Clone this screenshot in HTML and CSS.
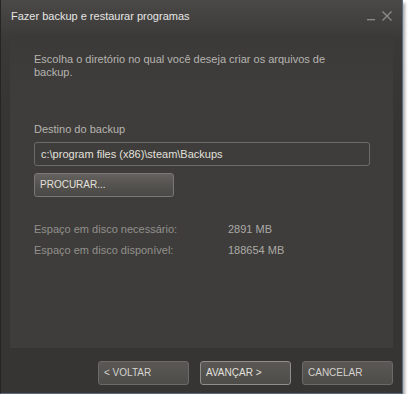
FILE: index.html
```html
<!DOCTYPE html>
<html>
<head>
<meta charset="utf-8">
<link rel="stylesheet" href="styles.css">
</head>
<body>
<div class="window">
  <div class="titlebar">
    <span class="title">Fazer backup e restaurar programas</span>
    <div class="controls">
      <svg class="min" width="9" height="10" viewBox="0 0 9 10"><rect x="0" y="8" width="8" height="1.3" fill="#8e8c89"/></svg>
      <svg class="close" width="12" height="12" viewBox="0 0 12 12"><path d="M1.5 1.5 L10.5 10.5 M10.5 1.5 L1.5 10.5" stroke="#8e8c89" stroke-width="1.4" fill="none"/></svg>
    </div>
  </div>
  <div class="panel">
    <p class="intro">Escolha o diretório no qual você deseja criar os arquivos de backup.</p>
    <div class="label">Destino do backup</div>
    <div class="input">c:\program files (x86)\steam\Backups</div>
    <div class="btn browse">PROCURAR...</div>
    <div class="rows">
      <div class="row"><span class="k">Espaço em disco necessário:</span><span class="v">2891 MB</span></div>
      <div class="row"><span class="k">Espaço em disco disponível:</span><span class="v">188654 MB</span></div>
    </div>
  </div>
  <div class="footer">
    <div class="btn fbtn">&lt; VOLTAR</div>
    <div class="btn fbtn focus">AVANÇAR &gt;</div>
    <div class="btn fbtn">CANCELAR</div>
  </div>
</div>
</body>
</html>
```
FILE: styles.css
```css
html, body {
  margin: 0;
  padding: 0;
  background: #ffffff;
}
body {
  font-family: "Liberation Sans", Arial, sans-serif;
  font-size: 11px;
}
.window {
  width: 403px;
  height: 394px;
  background: linear-gradient(to bottom, #4a4947 0px, #3a3937 40px, #363533 120px, #363533 100%);
  border-left: 1px solid #262524;
  border-right: 1px solid #5a6b80;
  border-bottom: 1px solid #5a6b80;
  box-sizing: border-box;
  box-shadow: 2px 3px 3px rgba(0,0,0,0.35);
  display: flex;
  flex-direction: column;
}
.titlebar {
  height: 34px;
  display: flex;
  align-items: flex-start;
  justify-content: space-between;
  padding: 9px 9px 0 10px;
  box-sizing: border-box;
}
.title {
  color: #e6e6e4;
  font-size: 11px;
  line-height: 14px;
}
.controls {
  display: flex;
  align-items: flex-start;
  gap: 5px;
  padding-top: 1px;
}
.min { margin-top: 1px; }
.panel {
  margin: 0 9px 0 9px;
  height: 314px;
  background: linear-gradient(to bottom, #3b3a38 0px, #3e3d3b 60px, #3e3d3b 100%);
  padding: 19px 24px 0 24px;
  box-sizing: border-box;
}
.intro {
  margin: 0;
  color: #b6b4b0;
  line-height: 13px;
  width: 320px;
}
.label {
  margin-top: 43px;
  color: #b6b4b0;
  line-height: 14px;
}
.input {
  margin-top: 6px;
  height: 24px;
  width: 336px;
  box-sizing: border-box;
  border: 1px solid #6d6b68;
  border-radius: 3px;
  color: #e2e0dc;
  padding: 0 6px;
  line-height: 22px;
}
.btn {
  height: 24px;
  box-sizing: border-box;
  border: 1px solid #7a7875;
  border-radius: 3px;
  background: linear-gradient(to bottom, #64615e 0%, #55534f 50%, #4a4845 100%);
  color: #e2e0dc;
  font-size: 10px;
  line-height: 22px;
  padding: 0 5px;
}
.browse {
  margin-top: 7px;
  width: 140px;
}
.rows {
  margin-top: 25px;
}
.row {
  display: flex;
  height: 21px;
  line-height: 14px;
}
.k {
  width: 194px;
  color: #92908c;
}
.v {
  color: #acaaa6;
}
.footer {
  display: flex;
  justify-content: flex-end;
  gap: 11px;
  padding: 13px 9px 0 0;
}
.fbtn {
  width: 91px;
  height: 24px;
  line-height: 22px;
  border-color: #6c6a67;
  background: linear-gradient(to bottom, #5a5754 0%, #4f4d4a 100%);
  color: #d4d2ce;
}
.fbtn.focus {
  border-color: #908e8a;
  color: #e2e0dc;
}
```
